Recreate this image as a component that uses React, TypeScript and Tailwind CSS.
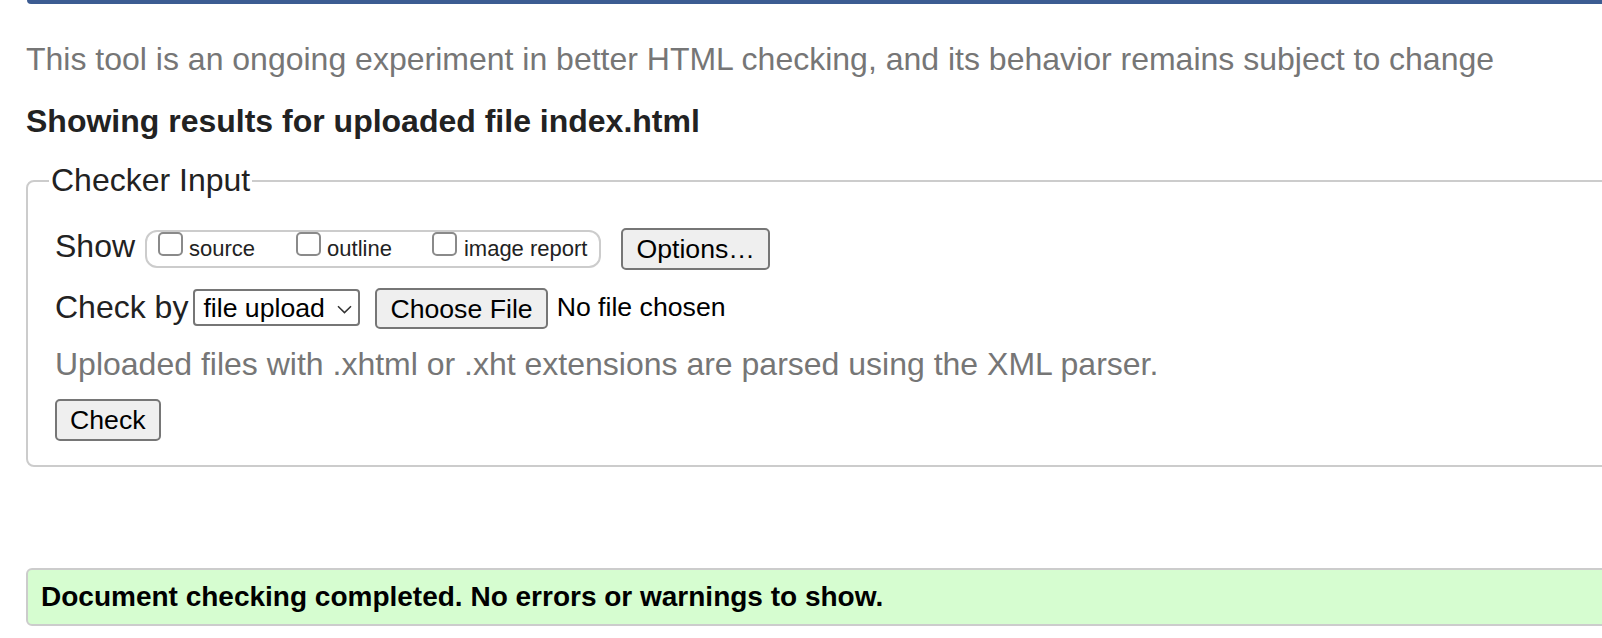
export default function App() {
  return (
    <div className="min-h-screen overflow-hidden bg-white pl-[26px] font-['Liberation_Sans',Arial,sans-serif] text-[#222]">
      <div className="ml-[1px] h-[4px] rounded-bl-[8px] bg-[#3c5c92]" />
      <p className="mt-[37px] text-[32px] leading-[37px] text-[#767676]">
        This tool is an ongoing experiment in better HTML checking, and its behavior remains subject to change
      </p>
      <h2 className="mt-[25px] text-[32px] font-bold leading-[37px] text-[#222]">Showing results for uploaded file index.html</h2>

      <fieldset className="-mr-[10px] mt-[22px] rounded-[8px] border-2 border-[#ccc] px-[27px] pb-[24px] pt-[29px]">
        <legend className="-ml-[6px] px-[2px] text-[32px] leading-[37px]">Checker Input</legend>

        <div className="flex h-[42px] items-start">
          <span className="text-[32px] leading-[37px]">Show</span>
          <div className="ml-[10px] mt-[2px] flex h-[38px] items-start rounded-[12px] border-2 border-[#ccc] pl-[11px] pr-[12px] text-[22px] leading-[26px]">
            <span className="h-[24px] w-[25px] rounded-[5px] border-2 border-[#8a8a8a] bg-white" />
            <span className="ml-[6px] mt-[4px]">source</span>
            <span className="ml-[41px] h-[24px] w-[25px] rounded-[5px] border-2 border-[#8a8a8a] bg-white" />
            <span className="ml-[6px] mt-[4px]">outline</span>
            <span className="ml-[40px] h-[24px] w-[25px] rounded-[5px] border-2 border-[#8a8a8a] bg-white" />
            <span className="ml-[7px] mt-[4px]">image report</span>
          </div>
          <button className="ml-[20px] flex h-[42px] items-center rounded-[5px] border-2 border-[#767676] bg-[#efefef] px-[13px] text-[26.67px] text-black">
            Options…
          </button>
        </div>

        <div className="mt-[18px] flex items-start">
          <span className="mt-[1px] text-[32px] leading-[37px]">Check by</span>
          <div className="ml-[5px] mt-[1px] flex h-[37px] w-[167px] items-center justify-between rounded-[4px] border-2 border-[#767676] bg-white pl-[8px] pr-[6px] text-[26.67px] text-black">
            <span>file upload</span>
            <svg width="15" height="9" viewBox="0 0 15 9" fill="none" stroke="#333" strokeWidth="1.5" className="mt-[3px]">
              <path d="M1 1.3 7.5 7.6 14 1.3" />
            </svg>
          </div>
          <button className="ml-[15px] flex h-[41px] items-center rounded-[5px] border-2 border-[#767676] bg-[#efefef] px-[13px] text-[26.67px] text-black">
            Choose File
          </button>
          <span className="ml-[9px] mt-[4px] text-[26.67px] leading-[31px] text-black">No file chosen</span>
        </div>

        <p className="mt-[17px] text-[32px] leading-[37px] text-[#767676]">
          Uploaded files with .xhtml or .xht extensions are parsed using the XML parser.
        </p>

        <button className="mt-[16px] flex h-[42px] items-center rounded-[5px] border-2 border-[#767676] bg-[#efefef] px-[13px] text-[26.67px] text-black">
          Check
        </button>
      </fieldset>

      <div className="-mr-[10px] mt-[101px] flex h-[58px] items-center rounded-[6px] border-2 border-[#ccc] bg-[#d6fdd0] pl-[13px] text-[28px] font-bold text-black">
        Document checking completed. No errors or warnings to show.
      </div>
    </div>
  );
}
